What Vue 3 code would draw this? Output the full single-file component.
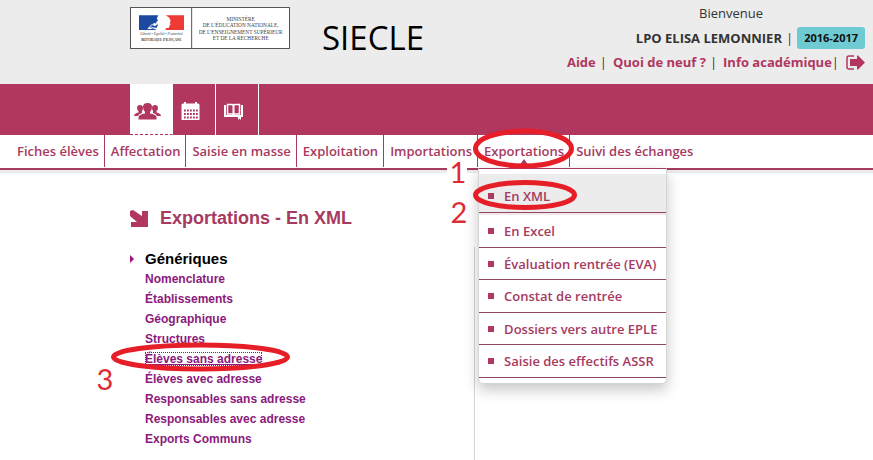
<script setup>
const tabs = ['Fiches élèves', 'Affectation', 'Saisie en masse', 'Exploitation', 'Importations', 'Exportations', 'Suivi des échanges']
const exportsMenu = ['En XML', 'En Excel', 'Évaluation rentrée (EVA)', 'Constat de rentrée', 'Dossiers vers autre EPLE', 'Saisie des effectifs ASSR']
const generics = ['Nomenclature', 'Établissements', 'Géographique', 'Structures', 'Élèves sans adresse', 'Élèves avec adresse', 'Responsables sans adresse', 'Responsables avec adresse', 'Exports Communs']
</script>

<template>
  <div class="page">
    <header class="top">
      <svg class="logo" viewBox="0 0 480 126" role="img" aria-label="Ministère de l'Éducation nationale">
        <rect x="1.5" y="1.5" width="477" height="123" fill="#fff" stroke="#555" stroke-width="3" />
        <path d="M185 0V126" stroke="#555" stroke-width="3" />
        <path d="M27 25H85L80 35L84 40L77 48L84 54L76 69H27Z" fill="#1b4aa0" />
        <path d="M107 25H162V69H108L106 64L117 62L119 55L122 52L119 47L122 43L118 32Z" fill="#ee3a35" />
        <path d="M52 66L62 54L73 48L82 51L76 57L68 55L60 62L74 60L81 66Z" fill="#fff" />
        <path d="M58 60L70 52M64 66L76 61" stroke="#1b4aa0" stroke-width="2" />
        <g text-anchor="middle" class="logo-text">
          <text x="94" y="84" font-size="11" font-style="italic">Liberté • Égalité • Fraternité</text>
          <text x="94" y="102" font-size="13" font-weight="bold" font-variant="small-caps">République Française</text>
          <text x="332" y="42" font-size="16">MINISTÈRE</text>
          <text x="332" y="61" font-size="16">DE L'ÉDUCATION NATIONALE,</text>
          <text x="332" y="81" font-size="16">DE L'ENSEIGNEMENT SUPÉRIEUR</text>
          <text x="332" y="100" font-size="16">ET DE LA RECHERCHE</text>
        </g>
      </svg>
      <h1 class="app-name">SIECLE</h1>
      <div class="account">
        <p class="welcome">Bienvenue</p>
        <p class="school"><strong>LPO ELISA LEMONNIER</strong><span>|</span><span class="year">2016-2017</span></p>
        <nav class="links">
          <a href="#">Aide</a><span class="bar wide">|</span>
          <a href="#">Quoi de neuf ?</a><span class="bar wide">|</span>
          <a href="#">Info académique</a><span class="bar last">|</span>
          <a href="#" class="exit" aria-label="Déconnexion">
            <svg viewBox="0 0 19 15" width="19" height="15">
              <path d="M8 1H3Q1 1 1 3V12Q1 14 3 14H8" fill="none" stroke="#b1375f" stroke-width="1.500" />
              <path d="M4 4H11V0.500H12L19 7.500L12 14.500H11V11H4Z" fill="#b1375f" />
            </svg>
          </a>
        </nav>
      </div>
    </header>

    <nav class="modules">
      <a href="#" class="module active" aria-label="Élèves">
        <svg viewBox="0 0 27 18" width="27" height="18" fill="#b1375f">
          <path d="M0 14Q0 11.500 4.500 10.500V9Q3 8 3 6Q3 3 6 3Q9 3 9 6Q9 8 8 9V11Q4.500 12 4 14Z" />
          <path d="M27 14Q27 11.500 22.500 10.500V9Q24 8 24 6Q24 3 21 3Q18 3 18 6Q18 8 19 9V11Q22.500 12 23 14Z" />
          <path d="M4.500 17.500V15Q5 12.500 11 11.500V10Q9 8 9 5Q9 1 13.500 1Q18 1 18 5Q18 8 16 10V11.500Q22 12.500 22.500 15V17.500Z" />
        </svg>
      </a>
      <a href="#" class="module" aria-label="Calendrier">
        <svg viewBox="0 0 19 19" width="19" height="19">
          <path d="M0.500 3Q0.500 1.500 2 1.500H3V0H5V1.500H14V0H16V1.500H17Q18.500 1.500 18.500 3V18H0.500Z" fill="#fff" />
          <path d="M3 8.500H17M3 12H17M3 15.500H17" stroke="#b1375f" stroke-width="2" stroke-dasharray="1.800 1.200" />
        </svg>
      </a>
      <a href="#" class="module" aria-label="Documentation">
        <svg viewBox="0 0 19 17" width="19" height="17" fill="none" stroke="#fff">
          <path d="M3.500 11V1.500H8.500L9.500 2.500L10.500 1.500H15.500V11H10.500L9.500 12L8.500 11Z" stroke-width="1.500" />
          <path d="M9.500 2V12" stroke-width="2" />
          <path d="M1 2V13H18V2" stroke-width="2" />
          <path d="M14 13V17L15.500 15.500L17 17V13Z" fill="#fff" stroke="none" />
        </svg>
      </a>
    </nav>

    <nav class="menu">
      <ul class="tabs">
        <li v-for="tab in tabs" :key="tab" class="tab">
          <a href="#">{{ tab }}</a>
          <template v-if="tab === 'Exportations'">
            <span class="pointer"></span>
            <ul class="dropdown">
              <li v-for="entry in exportsMenu" :key="entry"><a href="#">{{ entry }}</a></li>
            </ul>
          </template>
        </li>
      </ul>
    </nav>

    <main class="content">
      <section class="column">
        <h2>
          <svg viewBox="0 0 18 17" width="18" height="17">
            <path d="M0 1L3 0L12 6V1H18V17H1V12H7L0 6Z" fill="#b1375f" />
          </svg>
          Exportations - En XML
        </h2>
        <div class="group">
          <h3>Génériques</h3>
          <ul>
            <li v-for="item in generics" :key="item">
              <a href="#" :class="{ focused: item === 'Élèves sans adresse' }">{{ item }}</a>
            </li>
          </ul>
        </div>
      </section>
    </main>

    <svg class="marks" width="600" height="400" viewBox="0 0 600 400">
      <path d="M447 165H467V187H447Z" fill="#fff" />
      <g fill="none" stroke="#e61e28" stroke-width="5">
        <ellipse cx="523.500" cy="148.500" rx="48" ry="17.500" />
        <ellipse cx="525" cy="195" rx="49.500" ry="12.500" />
        <ellipse cx="200.500" cy="357" rx="87" ry="12" />
      </g>
      <g class="mark-text" text-anchor="middle">
        <text x="458" y="183">1</text>
        <text x="459" y="223">2</text>
        <text x="105" y="390">3</text>
      </g>
    </svg>
  </div>
</template>

<style>
body { margin: 0; background: #fff; }
</style>

<style scoped>
.page {
  position: relative;
  display: flex;
  flex-direction: column;
  min-height: 100vh;
  font-family: "Open Sans", "Noto Sans", sans-serif;
  font-size: 13px;
  color: #333;
}
h1, h2, h3, p, ul { margin: 0; padding: 0; }
ul { list-style: none; }
a { color: #a63a5f; text-decoration: none; }

.top {
  display: flex;
  align-items: flex-start;
  box-sizing: border-box;
  height: 84px;
  padding: 7px 8px 0 130px;
  background: #ececec;
}
.logo { flex: none; width: 160px; height: 42px; }
.logo-text { font-family: "Liberation Serif", serif; fill: #444; }
.app-name {
  margin: 10px 0 0 32px;
  font-size: 33px;
  font-weight: 400;
  line-height: 42px;
  color: #000;
}
.account {
  display: flex;
  flex-direction: column;
  align-items: flex-end;
  margin-left: auto;
  margin-top: -4px;
  white-space: nowrap;
}
.welcome { padding-right: 102px; line-height: 20px; }
.school { display: flex; align-items: center; gap: 4px; height: 30px; }
.year {
  padding: 0 7px;
  border-radius: 3px;
  background: #6ecbd2;
  color: #111;
  font-size: 11px;
  font-weight: 700;
  line-height: 22px;
}
.links { display: flex; align-items: center; height: 18px; font-weight: 700; }
.links a { color: #b1375f; }
.bar { font-weight: 400; }
.bar.wide { margin: 0 6px 0 4px; }
.bar.last { margin: 0 7px 0 0; }
.exit { display: flex; }

.modules {
  display: flex;
  height: 51px;
  padding-left: 130px;
  background: #b1375f;
}
.module {
  display: flex;
  align-items: center;
  justify-content: center;
  box-sizing: border-box;
  width: 43px;
  padding-top: 3px;
  border-right: 1px solid #fff;
}
.module svg { margin-right: 8px; }
.module.active { background: #fff; border-bottom: 1px dashed #b1375f; }

.menu {
  height: 33px;
  border-bottom: 2px solid #a63a5f;
  box-shadow: 0 3px 0 #ebebeb;
}
.tabs { display: flex; padding-left: 11px; }
.tab { position: relative; height: 32px; padding: 0 5px 0 6px; border-right: 1px solid #a63a5f; }
.tab:last-child { border-right: 0; }
.tab > a { font-weight: 600; line-height: 33px; white-space: nowrap; }
.pointer {
  position: absolute;
  bottom: 1px;
  left: 50%;
  border: 5px solid transparent;
  border-top: 0;
  border-bottom: 7px solid #a63a5f;
  transform: translateX(-50%);
}
.dropdown {
  position: absolute;
  top: 33px;
  left: 0;
  z-index: 1;
  width: 187px;
  padding: 5px 0;
  border: 1px solid #d5d5d5;
  border-top-color: #a63a5f;
  border-radius: 0 0 5px 5px;
  background: #fff;
  box-shadow: 0 6px 14px rgba(0, 0, 0, 0.22);
}
.dropdown li {
  display: flex;
  align-items: center;
  box-sizing: border-box;
  height: 33px;
  padding-left: 9px;
  border-bottom: 1px solid #8f4464;
}
.dropdown li:nth-child(3), .dropdown li:nth-child(5) { height: 32px; }
.dropdown li:first-child {
  height: 39px;
  padding-top: 6px;
  margin-bottom: 2px;
  background: #ececec;
  box-shadow: 0 2px 0 #f5e8ed;
}
.dropdown li::before { content: ""; width: 6px; height: 6px; margin-right: 10px; background: #b1375f; }
.dropdown a { font-weight: 600; white-space: nowrap; }

.content { display: flex; flex: 1; font-family: "Liberation Sans", Arial, sans-serif; font-weight: 700; }
.column { position: relative; width: 475px; }
.column::after {
  content: "";
  position: absolute;
  top: 77px;
  right: 0;
  bottom: 0;
  border-right: 1px solid #d5d5d5;
}
h2 {
  display: flex;
  align-items: center;
  gap: 12px;
  padding: 37px 0 0 130px;
  font-size: 18px;
  line-height: 22px;
  color: #a63a5f;
}
.group { padding: 21px 0 10px 145px; }
h3 {
  position: relative;
  font-size: 15px;
  line-height: 18px;
  color: #000;
}
h3::before {
  content: "";
  position: absolute;
  top: 5px;
  left: -15px;
  border: 4px solid transparent;
  border-left-color: #a6127c;
  border-right: 0;
}
.group li { line-height: 20px; font-size: 12px; }
.group ul { padding-top: 1px; }
.group a { color: #8c1a7c; }
.group a.focused { text-decoration: underline; outline: 1px dotted #8c1a7c; outline-offset: -1px; }

.marks { position: absolute; top: 0; left: 0; z-index: 2; pointer-events: none; }
.mark-text { font-family: Lato, sans-serif; font-size: 29px; fill: #dd2c33; }
</style>
